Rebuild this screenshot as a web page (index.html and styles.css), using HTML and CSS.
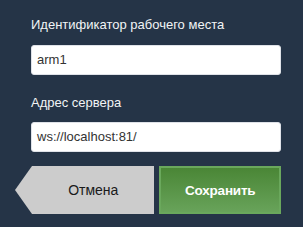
FILE: index.html
```html
<!DOCTYPE html>
<html lang="ru">
<head>
<meta charset="utf-8">
<link rel="stylesheet" href="styles.css">
</head>
<body>
<div class="form">
  <label class="label">Идентификатор рабочего места</label>
  <div class="input">arm1</div>
  <label class="label label-2">Адрес сервера</label>
  <div class="input">ws://localhost:81/</div>
  <div class="actions">
    <div class="btn btn-cancel">Отмена</div>
    <div class="btn btn-save">Сохранить</div>
  </div>
</div>
</body>
</html>
```
FILE: styles.css
```css
html, body {
  margin: 0;
  padding: 0;
  background: #253447;
  width: 303px;
  height: 227px;
  overflow: hidden;
}
.form {
  display: flex;
  flex-direction: column;
  padding: 17px 22px 0 31px;
  font-family: "Liberation Sans", Arial, sans-serif;
  font-size: 13px;
}
.label {
  color: #f2f4f6;
  line-height: 15px;
  height: 15px;
  margin-bottom: 13px;
}
.label-2 {
  margin-top: 20px;
  margin-bottom: 12px;
}
.input {
  box-sizing: border-box;
  height: 30px;
  width: 250px;
  background: #fff;
  border: 1px solid #dfe2e8;
  border-radius: 3px;
  padding: 0 5px;
  line-height: 28px;
  color: #333;
}
.actions {
  display: flex;
  margin-top: 14px;
  gap: 5px;
}
.btn {
  box-sizing: border-box;
  height: 48px;
  display: flex;
  align-items: center;
  justify-content: center;
  font-size: 14px;
}
.btn-cancel {
  position: relative;
  width: 123px;
  margin-left: 1px;
  background: #cccccc;
  color: #1a1a1a;
  font-weight: normal;
}
.btn-cancel::before {
  content: "";
  position: absolute;
  left: -17px;
  top: 0;
  width: 0;
  height: 0;
  border-top: 24px solid transparent;
  border-bottom: 24px solid transparent;
  border-right: 17px solid #cccccc;
}
.btn-save {
  width: 122px;
  color: #fff;
  font-weight: bold;
  font-size: 13.5px;
  letter-spacing: -0.2px;
  border: 2px solid #6aa85c;
  background: linear-gradient(to bottom, #4a8636, #68a35a);
}
```
